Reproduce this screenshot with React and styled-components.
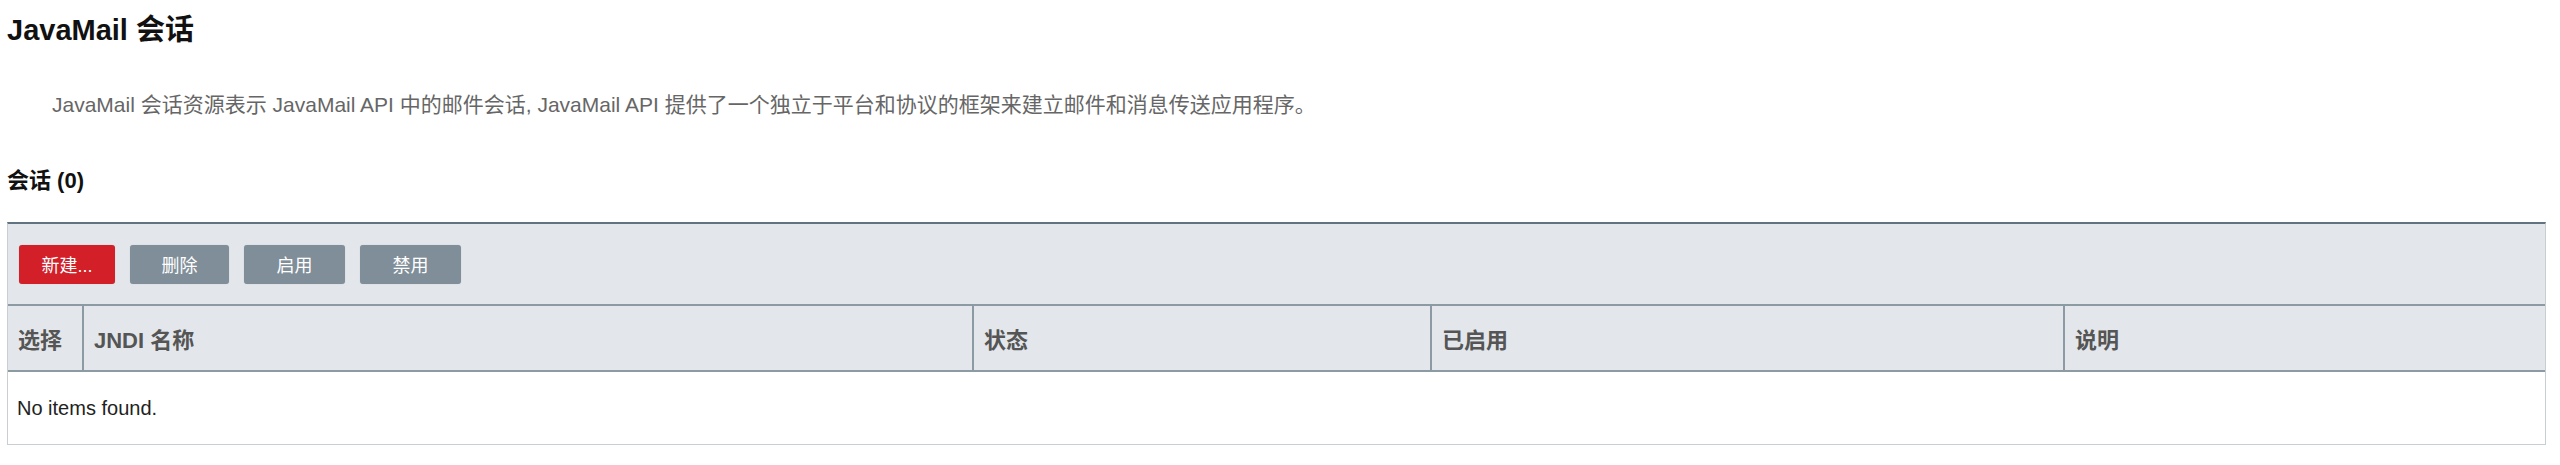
import React from "react";
import styled, { createGlobalStyle } from "styled-components";

const Global = createGlobalStyle`
  html, body { margin: 0; padding: 0; background: #fff; }
  body { font-family: "Liberation Sans", Arial, "Noto Sans CJK SC", sans-serif; color: #222; }
`;

const Page = styled.div`
  padding: 0 14px 0 7px;
  display: flex;
  flex-direction: column;
`;

const Title = styled.h1`
  margin: 12px 0 0 0;
  font-size: 29px;
  line-height: 36px;
  font-weight: bold;
  color: #111;
`;

const Description = styled.p`
  margin: 44px 0 0 0;
  padding-left: 45px;
  font-size: 21px;
  line-height: 26px;
  color: #666;
`;

const SectionTitle = styled.h2`
  margin: 50px 0 0 0;
  font-size: 22px;
  line-height: 26px;
  font-weight: bold;
  color: #111;
`;

const TableBox = styled.div`
  margin-top: 28px;
  border: 1px solid #c9ced2;
  border-top: 2px solid #5f7480;
  display: flex;
  flex-direction: column;
`;

const Toolbar = styled.div`
  background: #e3e7eb;
  height: 82px;
  box-sizing: border-box;
  padding: 0 0 0 11px;
  display: flex;
  align-items: center;
  gap: 15px;
  border-bottom: 2px solid #8b9aa3;
`;

const Button = styled.button`
  width: ${(p) => p.$w}px;
  height: 39px;
  border: none;
  border-radius: 3px;
  background: ${(p) => (p.$primary ? "#d21f28" : "#7f8e98")};
  color: #fff;
  font-family: "Liberation Sans", Arial, "Noto Sans CJK SC", sans-serif;
  font-size: 18px;
  padding: 0;
  box-shadow: 0 0 1px rgba(0, 0, 0, 0.2);
`;

const HeaderRow = styled.div`
  display: grid;
  grid-template-columns: 74px 890px 458px 633px 1fr;
  background: #e3e7eb;
  height: 66px;
  box-sizing: border-box;
  border-bottom: 2px solid #8b9aa3;
`;

const HeaderCell = styled.div`
  display: flex;
  align-items: center;
  padding-left: 10px;
  font-size: 22px;
  font-weight: bold;
  color: #555;
  border-left: ${(p) => (p.$first ? "none" : "2px solid #8b9aa3")};
`;

const BodyRow = styled.div`
  height: 72px;
  display: flex;
  align-items: center;
  padding-left: 9px;
  font-size: 20px;
  color: #222;
  background: #fff;
`;

const columns = ["选择", "JNDI 名称", "状态", "已启用", "说明"];

export default function App() {
  return (
    <>
      <Global />
      <Page>
        <Title>JavaMail 会话</Title>
        <Description>
          JavaMail 会话资源表示 JavaMail API 中的邮件会话, JavaMail API 提供了一个独立于平台和协议的框架来建立邮件和消息传送应用程序。
        </Description>
        <SectionTitle>会话 (0)</SectionTitle>
        <TableBox>
          <Toolbar>
            <Button $primary $w={96}>新建...</Button>
            <Button $w={99}>删除</Button>
            <Button $w={101}>启用</Button>
            <Button $w={101}>禁用</Button>
          </Toolbar>
          <HeaderRow>
            {columns.map((c, i) => (
              <HeaderCell key={c} $first={i === 0}>{c}</HeaderCell>
            ))}
          </HeaderRow>
          <BodyRow>No items found.</BodyRow>
        </TableBox>
      </Page>
    </>
  );
}
